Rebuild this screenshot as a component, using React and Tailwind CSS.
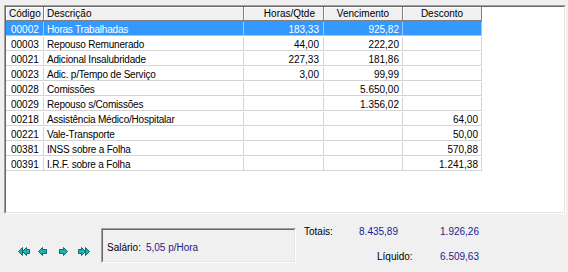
import React from 'react';

const linhas = [
  ['00002', 'Horas Trabalhadas', '183,33', '925,82', ''],
  ['00003', 'Repouso Remunerado', '44,00', '222,20', ''],
  ['00021', 'Adicional Insalubridade', '227,33', '181,86', ''],
  ['00023', 'Adic. p/Tempo de Serviço', '3,00', '99,99', ''],
  ['00028', 'Comissões', '', '5.650,00', ''],
  ['00029', 'Repouso s/Comissões', '', '1.356,02', ''],
  ['00218', 'Assistência Médico/Hospitalar', '', '', '64,00'],
  ['00221', 'Vale-Transporte', '', '', '50,00'],
  ['00381', 'INSS sobre a Folha', '', '', '570,88'],
  ['00391', 'I.R.F. sobre a Folha', '', '', '1.241,38'],
];

function Seta({ tipo }) {
  // setas de navegação (primeiro, anterior, próximo, último)
  const pontos = {
    primeiro: ['0,4 4,0 4,8', '4,4 8,0 8,2 11,2 11,6 8,6 8,8'],
    anterior: ['0,4 4,0 4,2 8,2 8,6 4,6 4,8'],
    proximo: ['9,4 5,0 5,2 1,2 1,6 5,6 5,8'],
    ultimo: ['11,4 7,0 7,8', '7,4 3,0 3,2 0,2 0,6 3,6 3,8'],
  }[tipo];
  return (
    <svg width="12" height="9" viewBox="-0.5 -0.5 12 9">
      {pontos.map((p, i) => (
        <polygon key={i} points={p} fill="#19b4b4" stroke="#0a5a5a" strokeWidth="0.9" strokeLinejoin="round" />
      ))}
    </svg>
  );
}

export default function App() {
  return (
    <div className="w-[568px] h-[272px] bg-[#f0f0f0] font-['Liberation_Sans',Arial,sans-serif] text-[10px] text-black overflow-hidden">
      {/* grade */}
      <div className="ml-[4px] mt-[5px] w-[562px] h-[209px] border border-t-[#a0a0a0] border-l-[#a0a0a0] border-b-white border-r-white">
        <div className="w-full h-full border border-t-[#696969] border-l-[#696969] border-b-[#e3e3e3] border-r-[#e3e3e3] bg-white">
          <div className="flex h-[14px] w-[476px] bg-[#f0f0f0] leading-[13px]">
            <div className="w-[38px] pl-[3px] border-r border-b border-[#808080] shadow-[inset_1px_1px_0_#ffffff]">Código</div>
            <div className="w-[200px] pl-[3px] border-r border-b border-[#808080] shadow-[inset_1px_1px_0_#ffffff]">Descrição</div>
            <div className="w-[80px] pr-[8px] text-right border-r border-b border-[#808080] shadow-[inset_1px_1px_0_#ffffff]">Horas/Qtde</div>
            <div className="w-[79px] text-center border-r border-b border-[#808080] shadow-[inset_1px_1px_0_#ffffff]">Vencimento</div>
            <div className="w-[79px] text-center border-r border-b border-[#808080] shadow-[inset_1px_1px_0_#ffffff]">Desconto</div>
          </div>
          {linhas.map((l, i) => {
            const sel = i === 0;
            const cel = `border-r border-b ${sel ? 'border-[#9ccbf7]' : 'border-[#d4d4d4]'}`;
            return (
              <div key={l[0]} className={`flex h-[15px] w-[476px] leading-[15px] pt-[1px] ${sel ? 'bg-[#3399ff] text-white' : ''}`}>
                <div className={`w-[38px] pl-[5px] ${cel}`}>{l[0]}</div>
                <div className={`w-[200px] pl-[3px] tracking-[-0.2px] whitespace-nowrap ${cel}`}>{l[1]}</div>
                <div className={`w-[80px] pr-[4px] text-right ${cel}`}>{l[2]}</div>
                <div className={`w-[79px] pr-[3px] text-right ${cel}`}>{l[3]}</div>
                <div className={`w-[79px] pr-[3px] text-right ${cel}`}>{l[4]}</div>
              </div>
            );
          })}
        </div>
      </div>

      {/* rodapé */}
      <div className="flex h-[58px]">
        <div className="flex ml-[14px] mt-[32px] h-[10px]">
          {['primeiro', 'anterior', 'proximo', 'ultimo'].map((t) => (
            <div key={t} className="w-[20px] flex justify-center items-center">
              <Seta tipo={t} />
            </div>
          ))}
        </div>
        <div className="ml-[7px] mt-[14px] w-[195px] h-[35px] border border-t-[#a0a0a0] border-l-[#a0a0a0] border-b-white border-r-white">
          <div className="w-full h-full border border-t-[#696969] border-l-[#696969] border-b-[#e3e3e3] border-r-[#e3e3e3] flex items-center pl-[4px] pt-[4px] gap-[5px]">
            <span>Salário:</span>
            <span className="text-[#1c1c8c]">5,05 p/Hora</span>
          </div>
        </div>
        <div className="ml-[8px] mt-[12px] flex flex-col gap-[13px] leading-[12px]">
          <div className="flex">
            <div className="w-[94px] flex justify-between">
              <span>Totais:</span>
              <span className="text-[#1c1c8c]">8.435,89</span>
            </div>
            <div className="w-[81px] text-right text-[#1c1c8c]">1.926,26</div>
          </div>
          <div className="flex pl-[73px] w-[175px] justify-between">
            <span>Líquido:</span>
            <span className="text-[#1c1c8c]">6.509,63</span>
          </div>
        </div>
      </div>
    </div>
  );
}
